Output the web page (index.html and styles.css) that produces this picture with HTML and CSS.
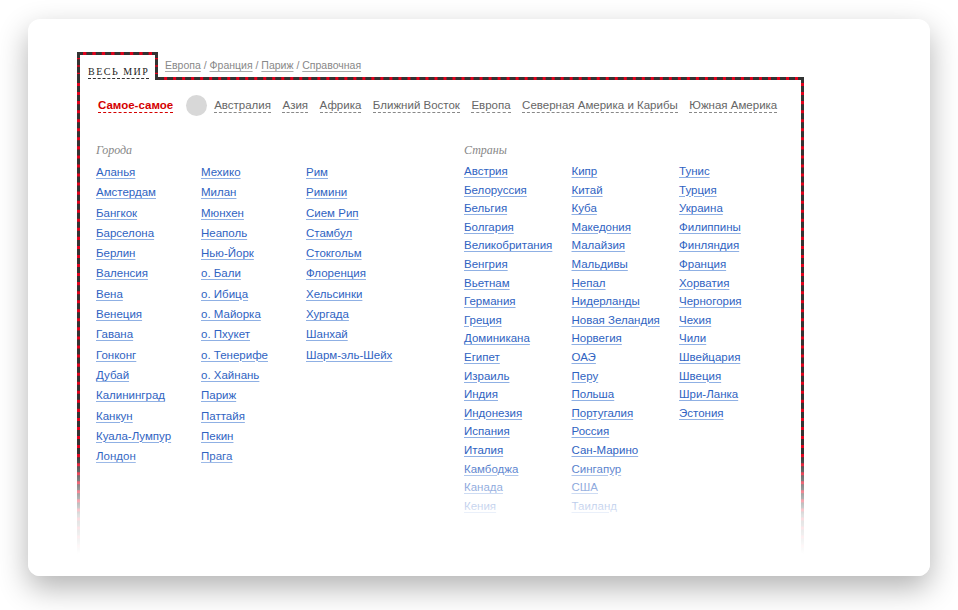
FILE: index.html
```html
<!DOCTYPE html>
<html lang="ru">
<head>
    <meta charset="UTF-8">
    <title>Весь мир</title>
    <link rel="stylesheet" href="styles.css">
</head>
<body>
    <div class="card">
        <div class="tabs">
            <div class="tab"><span>Весь мир</span></div>
            <div class="crumbs">
                <a href="#">Европа</a> / <a href="#">Франция</a> / <a href="#">Париж</a> / <a href="#">Справочная</a>
            </div>
        </div>

        <div class="frame">
            <!-- Regions -->
            <div class="regions">
                <a href="#" class="active">Самое-самое</a>
                <span class="dot"></span>
                <a href="#">Австралия</a>
                <a href="#">Азия</a>
                <a href="#">Африка</a>
                <a href="#">Ближний Восток</a>
                <a href="#">Европа</a>
                <a href="#">Северная Америка и Карибы</a>
                <a href="#">Южная Америка</a>
            </div>

            <div class="lists">
                <!-- Cities -->
                <div class="group cities">
                    <h3>Города</h3>
                    <div class="cols">
                        <ul>
                            <li><a href="#">Аланья</a></li>
                            <li><a href="#">Амстердам</a></li>
                            <li><a href="#">Бангкок</a></li>
                            <li><a href="#">Барселона</a></li>
                            <li><a href="#">Берлин</a></li>
                            <li><a href="#">Валенсия</a></li>
                            <li><a href="#">Вена</a></li>
                            <li><a href="#">Венеция</a></li>
                            <li><a href="#">Гавана</a></li>
                            <li><a href="#">Гонконг</a></li>
                            <li><a href="#">Дубай</a></li>
                            <li><a href="#">Калининград</a></li>
                            <li><a href="#">Канкун</a></li>
                            <li><a href="#">Куала-Лумпур</a></li>
                            <li><a href="#">Лондон</a></li>
                        </ul>
                        <ul>
                            <li><a href="#">Мехико</a></li>
                            <li><a href="#">Милан</a></li>
                            <li><a href="#">Мюнхен</a></li>
                            <li><a href="#">Неаполь</a></li>
                            <li><a href="#">Нью-Йорк</a></li>
                            <li><a href="#">о. Бали</a></li>
                            <li><a href="#">о. Ибица</a></li>
                            <li><a href="#">о. Майорка</a></li>
                            <li><a href="#">о. Пхукет</a></li>
                            <li><a href="#">о. Тенерифе</a></li>
                            <li><a href="#">о. Хайнань</a></li>
                            <li><a href="#">Париж</a></li>
                            <li><a href="#">Паттайя</a></li>
                            <li><a href="#">Пекин</a></li>
                            <li><a href="#">Прага</a></li>
                        </ul>
                        <ul>
                            <li><a href="#">Рим</a></li>
                            <li><a href="#">Римини</a></li>
                            <li><a href="#">Сием Рип</a></li>
                            <li><a href="#">Стамбул</a></li>
                            <li><a href="#">Стокгольм</a></li>
                            <li><a href="#">Флоренция</a></li>
                            <li><a href="#">Хельсинки</a></li>
                            <li><a href="#">Хургада</a></li>
                            <li><a href="#">Шанхай</a></li>
                            <li><a href="#">Шарм-эль-Шейх</a></li>
                        </ul>
                    </div>
                </div>

                <!-- Countries -->
                <div class="group countries">
                    <h3>Страны</h3>
                    <div class="cols">
                        <ul>
                            <li><a href="#">Австрия</a></li>
                            <li><a href="#">Белоруссия</a></li>
                            <li><a href="#">Бельгия</a></li>
                            <li><a href="#">Болгария</a></li>
                            <li><a href="#">Великобритания</a></li>
                            <li><a href="#">Венгрия</a></li>
                            <li><a href="#">Вьетнам</a></li>
                            <li><a href="#">Германия</a></li>
                            <li><a href="#">Греция</a></li>
                            <li><a href="#">Доминикана</a></li>
                            <li><a href="#">Египет</a></li>
                            <li><a href="#">Израиль</a></li>
                            <li><a href="#">Индия</a></li>
                            <li><a href="#">Индонезия</a></li>
                            <li><a href="#">Испания</a></li>
                            <li><a href="#">Италия</a></li>
                            <li><a href="#">Камбоджа</a></li>
                            <li><a href="#">Канада</a></li>
                            <li><a href="#">Кения</a></li>
                        </ul>
                        <ul>
                            <li><a href="#">Кипр</a></li>
                            <li><a href="#">Китай</a></li>
                            <li><a href="#">Куба</a></li>
                            <li><a href="#">Македония</a></li>
                            <li><a href="#">Малайзия</a></li>
                            <li><a href="#">Мальдивы</a></li>
                            <li><a href="#">Непал</a></li>
                            <li><a href="#">Нидерланды</a></li>
                            <li><a href="#">Новая Зеландия</a></li>
                            <li><a href="#">Норвегия</a></li>
                            <li><a href="#">ОАЭ</a></li>
                            <li><a href="#">Перу</a></li>
                            <li><a href="#">Польша</a></li>
                            <li><a href="#">Португалия</a></li>
                            <li><a href="#">Россия</a></li>
                            <li><a href="#">Сан-Марино</a></li>
                            <li><a href="#">Сингапур</a></li>
                            <li><a href="#">США</a></li>
                            <li><a href="#">Таиланд</a></li>
                        </ul>
                        <ul>
                            <li><a href="#">Тунис</a></li>
                            <li><a href="#">Турция</a></li>
                            <li><a href="#">Украина</a></li>
                            <li><a href="#">Филиппины</a></li>
                            <li><a href="#">Финляндия</a></li>
                            <li><a href="#">Франция</a></li>
                            <li><a href="#">Хорватия</a></li>
                            <li><a href="#">Черногория</a></li>
                            <li><a href="#">Чехия</a></li>
                            <li><a href="#">Чили</a></li>
                            <li><a href="#">Швейцария</a></li>
                            <li><a href="#">Швеция</a></li>
                            <li><a href="#">Шри-Ланка</a></li>
                            <li><a href="#">Эстония</a></li>
                        </ul>
                    </div>
                </div>
            </div>
        </div>

        <div class="fade"></div>
    </div>
</body>
</html>
```

FILE: styles.css
```css
* {
    margin: 0;
    padding: 0;
    box-sizing: border-box;
}

html, body {
    height: 100%;
}

body {
    font-family: 'Liberation Sans', Arial, sans-serif;
    background: #fff;
    padding: 19px 28px 0;
}

ul {
    list-style: none;
}

a {
    text-decoration: none;
}

.card {
    position: relative;
    height: 557px;
    background: #fff;
    border-radius: 12px;
    box-shadow: 0 12px 30px rgba(0,0,0,0.3);
    overflow: hidden;
    padding: 33px 0 0 49px;
}

/* dashed red/black border */
.tab,
.frame {
    border: 3px dashed #333;
    background: linear-gradient(#fff, #fff) padding-box, #e3001b border-box;
}

.tabs {
    display: flex;
    align-items: flex-end;
}

.tab {
    position: relative;
    z-index: 1;
    width: 81px;
    height: 28px;
    border-bottom: 0;
    margin-bottom: -3px;
    padding: 6px 0 0 8px;
}

.tab span {
    font-family: 'Liberation Serif', 'Times New Roman', serif;
    font-size: 10px;
    text-transform: uppercase;
    letter-spacing: 1.5px;
    color: #222;
    border-bottom: 1px dashed #333;
    padding-bottom: 1px;
}

.crumbs {
    font-size: 10.5px;
    color: #888;
    padding: 0 0 6px 7px;
    white-space: nowrap;
}

.crumbs a {
    color: #888;
    text-decoration: underline;
    text-decoration-color: #aaa;
    text-underline-offset: 2px;
}

.frame {
    width: 727px;
    height: 540px;
    padding: 15px 0 0 16px;
}

.regions {
    display: flex;
    align-items: center;
    height: 20px;
    padding-left: 2px;
    font-size: 11.5px;
    white-space: nowrap;
}

.regions a {
    flex-shrink: 0;
    color: #666;
    border-bottom: 1px dashed #888;
    line-height: 14px;
    margin-right: 11.5px;
}

.regions a.active {
    color: #d40000;
    font-weight: bold;
    border-bottom-color: #d40000;
    margin-right: 13px;
}

.dot {
    flex-shrink: 0;
    width: 21px;
    height: 21px;
    border-radius: 50%;
    background: #d8d8d8;
    margin-right: 7px;
}

.lists {
    display: flex;
    margin-top: 25px;
}

.group h3 {
    font-family: 'Liberation Serif', 'Times New Roman', serif;
    font-style: italic;
    font-weight: normal;
    font-size: 12px;
    color: #888;
    height: 20px;
    line-height: 20px;
    margin-bottom: 2px;
}

.cols {
    display: flex;
}

.cities {
    width: 368px;
}

.cities ul {
    width: 105px;
}

.cities li {
    line-height: 20.3px;
}

.countries ul {
    width: 107.5px;
}

.countries li {
    line-height: 18.6px;
}

.group li {
    font-size: 11.5px;
    white-space: nowrap;
}

.group li a {
    color: #2f63c2;
    text-decoration: underline;
    text-decoration-color: #8fb0e4;
    text-underline-offset: 2px;
}

.fade {
    position: absolute;
    left: 0;
    right: 0;
    bottom: 0;
    height: 122px;
    background: linear-gradient(rgba(255,255,255,0), rgba(255,255,255,0.85) 50%, #fff 82%);
    pointer-events: none;
}
```
